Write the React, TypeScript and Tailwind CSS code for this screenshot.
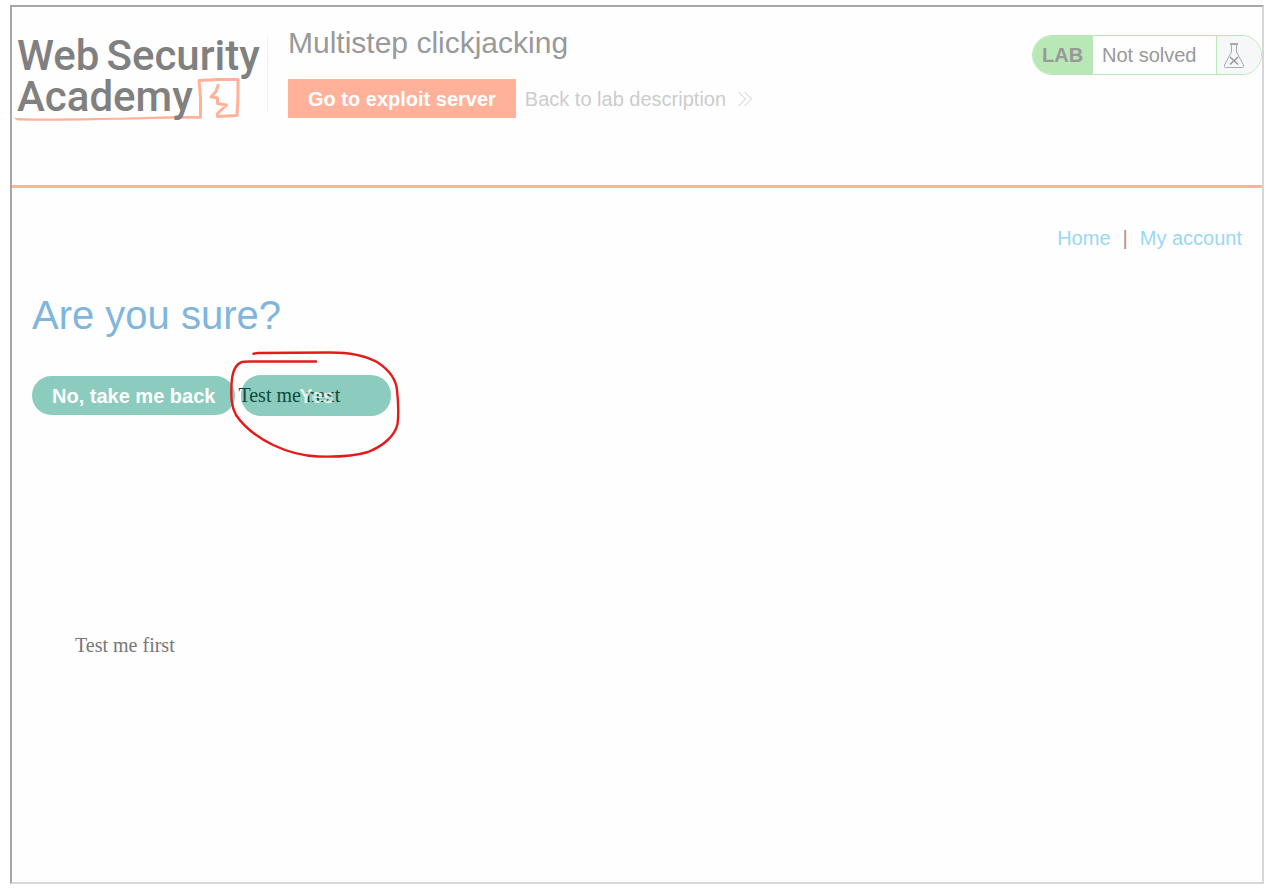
function AcademyLogo() {
  return (
    <div className="relative h-[78px] w-[256px] shrink-0 border-r border-[#f1f1f1]">
      <svg
        className="absolute -top-1 left-0 h-[94px] w-[256px]"
        viewBox="12 31 256 94"
        fill="none"
        aria-hidden="true"
      >
        <path
          fill="#ffb299"
          d="M14 117.500C16 119 70 118.500 110 117.800S170 115.500 200 116V118.800C150 118 90 121.500 18 120.500Q14 119 14 117.500Z"
        />
        <path
          stroke="#ffb299"
          strokeWidth="3"
          strokeLinejoin="round"
          d="M200.500 118.500L200.500 98L199 80.500L219 79.500H238L238 97L237 115.500L217.500 116.500L217.500 113.500L226.500 105L217.500 103.500L217.500 98L211 97L216 91.500L218.500 84"
        />
      </svg>
      <div className="relative pl-[5px] font-['Roboto','Liberation_Sans',sans-serif] text-[42px] font-medium leading-[41px] text-[#808080]">
        <div className="flex gap-[7px]">
          <span>Web</span>
          <span>Security</span>
        </div>
        <div>Academy</div>
      </div>
    </div>
  );
}

function LabStatus() {
  return (
    <div className="flex h-10 shrink-0 overflow-hidden rounded-[20px] border border-[#b8e8b5] text-xl leading-[38px] text-[#999999]">
      <span className="w-[60px] bg-[#b8e8b5] pl-[9px] font-bold">LAB</span>
      <span className="w-[123px] pl-[9px]">Not solved</span>
      <span className="flex w-[45px] border-l border-[#b8e8b5] bg-[#f6f7f9] pt-[7px] pl-[7px]">
        <svg className="h-[25px] w-5" viewBox="0 0 20 25" fill="none" stroke="#aaa" aria-hidden="true">
          <path d="M6 .5H14M6 1.500H14M7.500 1V9L.5 22V23.500Q.5 24.500 1.500 24.500H18.500Q19.500 24.500 19.500 23.500V22L12.500 9V1" />
          <path d="M6 14L14 21.500M14 14L6 21.500" stroke="#999" strokeWidth="1.500" />
        </svg>
      </span>
    </div>
  );
}

function HandDrawnCircle() {
  return (
    <svg
      className="pointer-events-none absolute -top-[25px] -left-[12px] z-30 h-[110px] w-[172px]"
      viewBox="229 350 172 110"
      fill="none"
      stroke="#e41b1b"
      strokeWidth="2.400"
      strokeLinecap="round"
      aria-hidden="true"
    >
      <path d="M253.500 353.700L258 353L330 352.500C352 352.500 366 356 377 362C391 371 396 380 397 390C398.500 404 398.500 417 397.500 424C395 436 383 446 368 452C352 457 335 457 318 456.500C302 456 288 452 273 445C257 437 244 427 236 415C231 406 231 396 231.500 385C232 371 236 364 242 362Q244 361.500 250 361.500H316" />
    </svg>
  );
}

export default function App() {
  return (
    <div className="min-h-screen bg-white pt-[5px] pr-[7px] pb-[6px] pl-[10px] font-['Liberation_Sans',Arial,sans-serif] text-xl">
      <div className="relative min-h-[879px] border-2 border-t-[#a6a6a6] border-r-[#d7d7d7] border-b-[#d7d7d7] border-l-[#a6a6a6] bg-[#fefefe]">
        <header className="flex h-[181px] items-start border-b-[3px] border-[#ffb299] pt-7">
          <AcademyLogo />
          <div className="grow pl-5">
            <h2 className="-mt-2 text-[30px] leading-8 text-[#999999]">Multistep clickjacking</h2>
            <div className="mt-5 flex items-center gap-[9px]">
              <button type="button" className="h-[39px] bg-[#ffb299] px-5 font-bold text-white">
                Go to exploit server
              </button>
              <a href="#description" className="flex items-center gap-3 text-[#cccccc]">
                Back to lab description
                <svg className="h-4 w-[14px]" viewBox="0 0 14 16" fill="none" stroke="#ccc" aria-hidden="true">
                  <path d="M.5 1L7.500 8L.5 15M6.500 1L13.500 8L6.500 15" />
                </svg>
              </a>
            </div>
          </div>
          <LabStatus />
        </header>

        <main className="px-5 pt-9">
          <nav className="flex justify-end gap-3 leading-7 text-[#99d8f3]">
            <a href="#home">Home</a>
            <span className="text-[#999999]">|</span>
            <a href="#account">My account</a>
          </nav>
          <h1 className="mt-[39px] text-[40px] leading-12 text-[#80b6dd]">Are you sure?</h1>
          <div className="mt-9 flex items-center gap-[6px] font-bold text-white">
            <button type="button" className="h-[39px] rounded-[20px] bg-[#8bccbe] px-5">
              No, take me back
            </button>
            <div className="relative">
              <button type="button" className="h-[41px] w-[150px] rounded-[20px] bg-[#8bccbe]">
                <span className="relative z-20 opacity-75">Yes</span>
              </button>
              <span className="pointer-events-none absolute top-[6px] -left-[3px] z-10 whitespace-nowrap font-['Liberation_Serif',serif] font-normal leading-7 text-[#0c4a3c]">
                Test me next
              </span>
              <HandDrawnCircle />
            </div>
          </div>
          <p className="mt-[215px] pl-[43px] font-['Liberation_Serif',serif] leading-7 text-[#777777]">
            Test me first
          </p>
        </main>
      </div>
    </div>
  );
}
